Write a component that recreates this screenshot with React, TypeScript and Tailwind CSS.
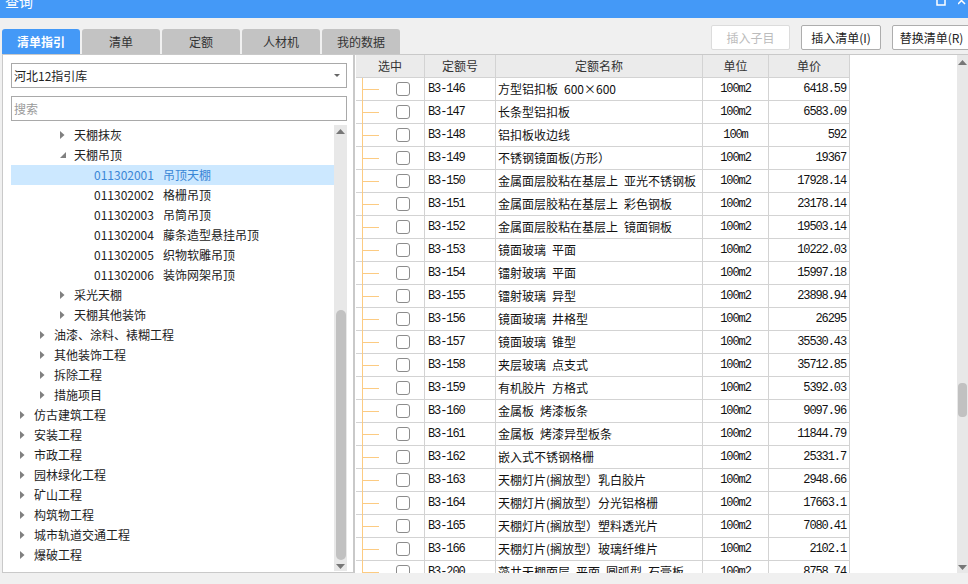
import React from 'react';

const rows = [
  ['B3-146', '方型铝扣板 600×600', '100m2', '6418.59'],
  ['B3-147', '长条型铝扣板', '100m2', '6583.09'],
  ['B3-148', '铝扣板收边线', '100m', '592'],
  ['B3-149', '不锈钢镜面板(方形）', '100m2', '19367'],
  ['B3-150', '金属面层胶粘在基层上 亚光不锈钢板', '100m2', '17928.14'],
  ['B3-151', '金属面层胶粘在基层上 彩色钢板', '100m2', '23178.14'],
  ['B3-152', '金属面层胶粘在基层上 镜面铜板', '100m2', '19503.14'],
  ['B3-153', '镜面玻璃 平面', '100m2', '10222.03'],
  ['B3-154', '镭射玻璃 平面', '100m2', '15997.18'],
  ['B3-155', '镭射玻璃 异型', '100m2', '23898.94'],
  ['B3-156', '镜面玻璃 井格型', '100m2', '26295'],
  ['B3-157', '镜面玻璃 锥型', '100m2', '35530.43'],
  ['B3-158', '夹层玻璃 点支式', '100m2', '35712.85'],
  ['B3-159', '有机胶片 方格式', '100m2', '5392.03'],
  ['B3-160', '金属板 烤漆板条', '100m2', '9097.96'],
  ['B3-161', '金属板 烤漆异型板条', '100m2', '11844.79'],
  ['B3-162', '嵌入式不锈钢格栅', '100m2', '25331.7'],
  ['B3-163', '天棚灯片(搁放型）乳白胶片', '100m2', '2948.66'],
  ['B3-164', '天棚灯片(搁放型）分光铝格栅', '100m2', '17663.1'],
  ['B3-165', '天棚灯片(搁放型）塑料透光片', '100m2', '7080.41'],
  ['B3-166', '天棚灯片(搁放型）玻璃纤维片', '100m2', '2102.1'],
  ['B3-200', '藻井天棚面层 平面 圆弧型 石膏板', '100m2', '8758.74'],
];

type Node = { level: number; label: string; code?: string; arrow?: 'right' | 'down'; selected?: boolean };

const tree: Node[] = [
  { level: 4, label: '天棚抹灰', arrow: 'right' },
  { level: 4, label: '天棚吊顶', arrow: 'down' },
  { level: 5, code: '011302001', label: '吊顶天棚', selected: true },
  { level: 5, code: '011302002', label: '格栅吊顶' },
  { level: 5, code: '011302003', label: '吊筒吊顶' },
  { level: 5, code: '011302004', label: '藤条造型悬挂吊顶' },
  { level: 5, code: '011302005', label: '织物软雕吊顶' },
  { level: 5, code: '011302006', label: '装饰网架吊顶' },
  { level: 4, label: '采光天棚', arrow: 'right' },
  { level: 4, label: '天棚其他装饰', arrow: 'right' },
  { level: 3, label: '油漆、涂料、裱糊工程', arrow: 'right' },
  { level: 3, label: '其他装饰工程', arrow: 'right' },
  { level: 3, label: '拆除工程', arrow: 'right' },
  { level: 3, label: '措施项目', arrow: 'right' },
  { level: 2, label: '仿古建筑工程', arrow: 'right' },
  { level: 2, label: '安装工程', arrow: 'right' },
  { level: 2, label: '市政工程', arrow: 'right' },
  { level: 2, label: '园林绿化工程', arrow: 'right' },
  { level: 2, label: '矿山工程', arrow: 'right' },
  { level: 2, label: '构筑物工程', arrow: 'right' },
  { level: 2, label: '城市轨道交通工程', arrow: 'right' },
  { level: 2, label: '爆破工程', arrow: 'right' },
];

const indent: Record<number, string> = { 2: 'pl-[9px]', 3: 'pl-[29px]', 4: 'pl-[49px]', 5: 'pl-[69px]' };

const tabs = ['清单指引', '清单', '定额', '人材机', '我的数据'];

const UpArrow = () => (
  <svg width="9" height="5" viewBox="0 0 9 5"><polygon points="0,5 4.5,0 9,5" fill="#777" /></svg>
);
const DownArrow = () => (
  <svg width="9" height="5" viewBox="0 0 9 5"><polygon points="0,0 4.5,5 9,0" fill="#777" /></svg>
);

const TreeRow = ({ n }: { n: Node }) => (
  <div className={`flex items-center h-[20px] ${indent[n.level]} ${n.selected ? 'bg-[#cce8ff] text-[#3a86d6]' : 'text-[#222]'}`}>
    <span className="w-[14px] flex items-center">
      {n.arrow === 'right' && (
        <svg width="5" height="8" viewBox="0 0 5 8"><polygon points="0,0 4.5,4 0,8" fill="#808080" /></svg>
      )}
      {n.arrow === 'down' && (
        <svg width="6" height="6" viewBox="0 0 6 6"><polygon points="6,0 6,6 0,6" fill="#808080" /></svg>
      )}
    </span>
    {n.code && <span className="mr-[9px]">{n.code}</span>}
    <span>{n.label}</span>
  </div>
);

const mono = "font-['Liberation_Mono',monospace] text-[12px] tracking-[-1.1px]";

export default function App() {
  return (
    <div className="w-[968px] h-[584px] overflow-hidden bg-[#f0f0f0] font-['Noto_Sans_CJK_SC',sans-serif] text-[12px]">
      {/* title bar */}
      <div className="h-[18px] bg-[#4499f7] flex justify-between overflow-hidden text-white">
        <span className="pl-[5px] text-[14px] leading-[14px] -mt-[6px]">查询</span>
        <div className="flex items-start gap-[12px] pr-[1px]">
          <svg width="10" height="6" viewBox="0 0 10 6"><rect x="1" y="-4" width="8" height="9" fill="none" stroke="#fff" strokeWidth="1.5" /></svg>
          <svg width="9" height="5" viewBox="0 0 9 5"><path d="M0,-3 L7,4 M7,-3 L0,4" stroke="#fff" strokeWidth="1.5" /></svg>
        </div>
      </div>

      {/* tabs + buttons */}
      <div className="h-[36px] flex justify-between">
        <div className="flex items-end gap-[2px] pl-[2px]">
          {tabs.map((t, i) => (
            <div
              key={t}
              className={`w-[78px] h-[25px] rounded-t-[3px] flex items-center justify-center text-[12px] ${i === 0 ? 'bg-[#4499f7] text-white font-bold' : 'bg-[#c3c3c3] text-[#333]'}`}
            >
              {t}
            </div>
          ))}
        </div>
        <div className="flex items-start gap-[11px] pt-[7px] -mr-[3px]">
          <button className="w-[79px] h-[25px] bg-white border border-[#dcdcdc] rounded-[2px] text-[#bcbcbc]">插入子目</button>
          <button className="w-[80px] h-[25px] bg-white border border-[#adadad] rounded-[2px] text-[#222]">插入清单(I)</button>
          <button className="w-[79px] h-[25px] bg-white border border-[#adadad] rounded-[2px] text-[#222] whitespace-nowrap">替换清单(R)</button>
        </div>
      </div>

      {/* main */}
      <div className="flex h-[519px]">
        {/* left panel */}
        <div className="ml-[2px] w-[352px] bg-white border border-[#c9c9c9] flex flex-col pl-[8px] pr-[6px] pt-[8px] pb-[1px]">
          <div className="h-[25px] border border-[#a9a9a9] flex items-center justify-between pl-[2px] pr-[6px] text-[#222]">
            <span>河北12指引库</span>
            <svg width="6" height="3" viewBox="0 0 6 3"><polygon points="0,0 6,0 3,3" fill="#666" /></svg>
          </div>
          <div className="mt-[8px] h-[25px] border border-[#a9a9a9] flex items-center pl-[2px] text-[#9a9a9a]">搜索</div>
          <div className="mt-[4px] flex flex-1 min-h-0">
            <div className="flex-1 overflow-hidden">
              {tree.map((n, i) => (
                <TreeRow key={i} n={n} />
              ))}
            </div>
            <div className="w-[13px] bg-[#e8e8e8] flex flex-col items-center">
              <div className="h-[10px] flex items-center pt-[3px]"><UpArrow /></div>
              <div className="flex-1 w-full flex flex-col">
                <div className="h-[175px]" />
                <div className="mx-auto w-[10px] h-[250px] rounded-[5px] bg-[#c1c1c1]" />
              </div>
              <div className="h-[10px] flex items-center"><DownArrow /></div>
            </div>
          </div>
        </div>

        {/* right panel */}
        <div className="flex-1 bg-white border-l border-t border-[#c9c9c9] flex min-w-0">
          <div className="flex-1 overflow-hidden pl-[1px]">
            <div className="grid grid-cols-[69px_71px_207px_66px_81px_1fr] h-[23px] text-[#333]">
              <div className="bg-[#ebebeb] border-r border-b border-[#d3d3d3] flex items-center justify-center">选中</div>
              <div className="bg-[#ebebeb] border-r border-b border-[#d3d3d3] flex items-center justify-center">定额号</div>
              <div className="bg-[#ebebeb] border-r border-b border-[#d3d3d3] flex items-center justify-center">定额名称</div>
              <div className="bg-[#ebebeb] border-r border-b border-[#d3d3d3] flex items-center justify-center">单位</div>
              <div className="bg-[#ebebeb] border-r border-b border-[#d3d3d3] flex items-center justify-center">单价</div>
              <div />
            </div>
            {rows.map(([code, name, unit, price]) => (
              <div key={code} className="grid grid-cols-[69px_71px_207px_66px_81px_1fr] h-[23px] text-[#111]">
                <div className="border-r border-b border-[#d3d3d3] flex items-center pl-[6px]">
                  <div className="w-[1px] h-[23px] bg-[#fccb82] self-start -mb-[1px]" />
                  <div className="w-[16px] h-[1px] bg-[#fccb82]" />
                  <div className="ml-[17px] w-[14px] h-[14px] border border-[#8c8c8c] rounded-[3px] bg-white" />
                </div>
                <div className={`border-r border-b border-[#d3d3d3] flex items-center pl-[3px] ${mono}`}>{code}</div>
                <div className="border-r border-b border-[#d3d3d3] flex items-center pl-[2px] whitespace-nowrap overflow-hidden">{name.replace(/ /g, '\u2002')}</div>
                <div className={`border-r border-b border-[#d3d3d3] flex items-center justify-center ${mono}`}>{unit}</div>
                <div className={`border-r border-b border-[#d3d3d3] flex items-center justify-end pr-[3px] ${mono}`}>{price}</div>
                <div />
              </div>
            ))}
          </div>
          <div className="w-[11px] bg-[#e8e8e8] flex flex-col items-center">
            <div className="h-[12px] flex items-center pt-[2px]"><UpArrow /></div>
            <div className="flex-1 w-full flex flex-col">
              <div className="h-[316px]" />
              <div className="mx-auto w-[9px] h-[34px] rounded-[4px] bg-[#c1c1c1]" />
            </div>
            <div className="h-[12px] flex items-center"><DownArrow /></div>
          </div>
        </div>
      </div>
    </div>
  );
}
